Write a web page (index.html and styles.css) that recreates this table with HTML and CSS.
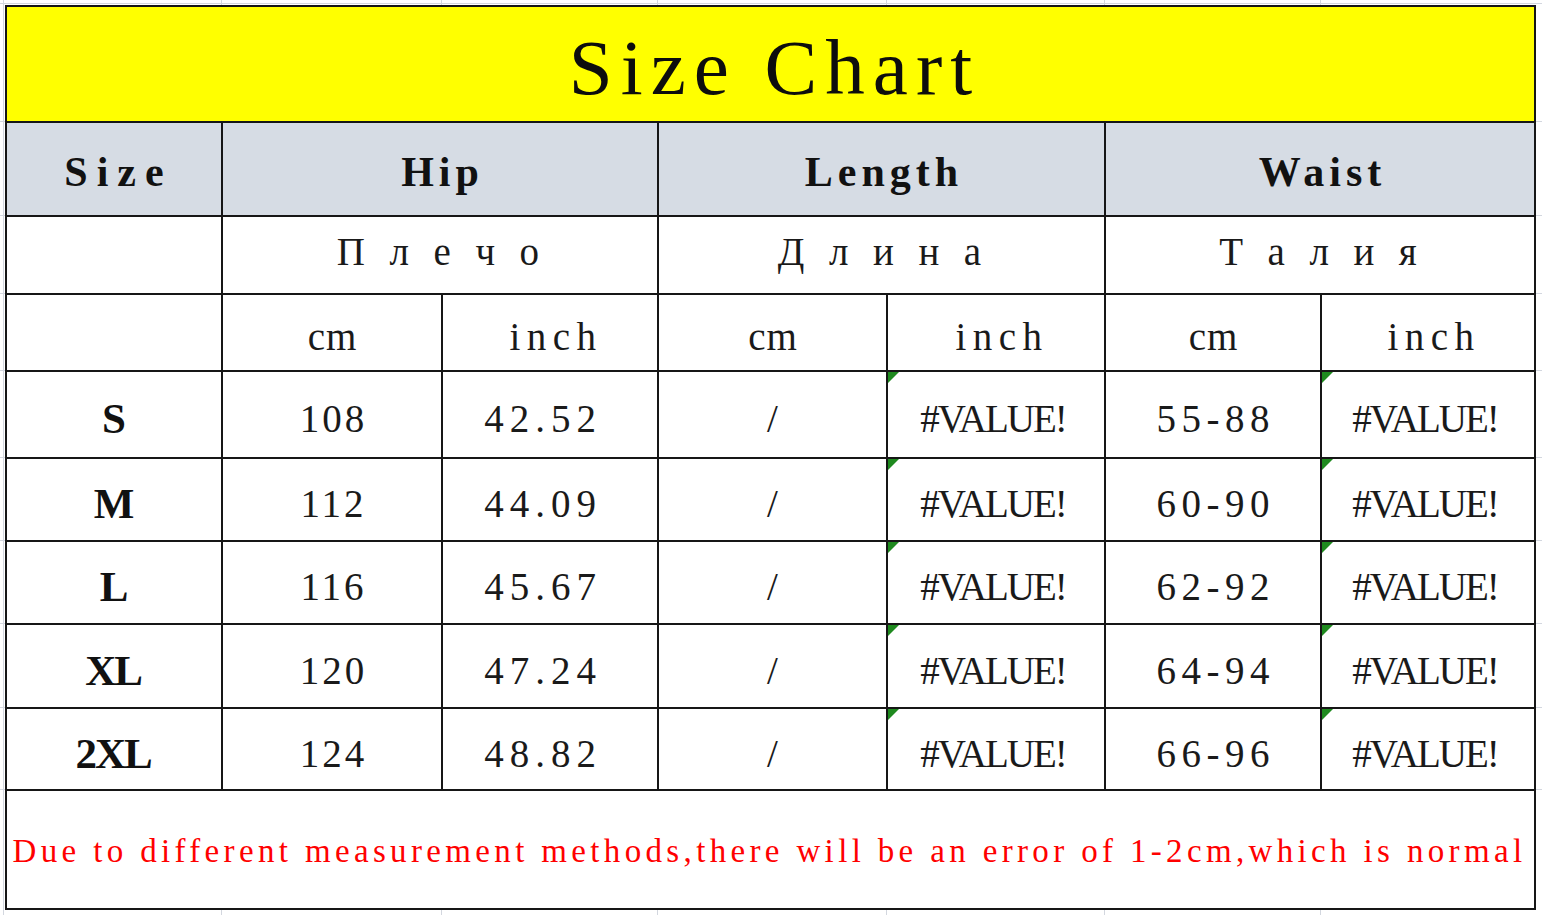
FILE: index.html
```html
<!DOCTYPE html>
<html lang="en">
<head>
<meta charset="utf-8">
<title>Size Chart</title>
<link rel="stylesheet" href="styles.css">
</head>
<body>
<div class="sheet">
  <div class="chart">
    <div class="cell title span7"><span class="t">Size Chart</span></div>

    <div class="cell head"><span class="h h-size">Size</span></div>
    <div class="cell head span2"><span class="h">Hip</span></div>
    <div class="cell head span2"><span class="h">Length</span></div>
    <div class="cell head span2"><span class="h">Waist</span></div>

    <div class="cell"></div>
    <div class="cell span2 ru"><span class="r">П л е ч о</span></div>
    <div class="cell span2 ru"><span class="r">Д л и н а</span></div>
    <div class="cell span2 ru"><span class="r">Т а л и я</span></div>

    <div class="cell"></div>
    <div class="cell unit"><span class="u">cm</span></div>
    <div class="cell unit"><span class="u u-wide">inch</span></div>
    <div class="cell unit"><span class="u">cm</span></div>
    <div class="cell unit"><span class="u u-wide">inch</span></div>
    <div class="cell unit"><span class="u">cm</span></div>
    <div class="cell unit"><span class="u u-wide">inch</span></div>

    <div class="cell size"><span class="s">S</span></div>
    <div class="cell data"><span class="d">108</span></div>
    <div class="cell data"><span class="d d-dec">42.52</span></div>
    <div class="cell data"><span class="d">/</span></div>
    <div class="cell data flag"><span class="d d-err">#VALUE!</span></div>
    <div class="cell data"><span class="d d-range">55-88</span></div>
    <div class="cell data flag"><span class="d d-err">#VALUE!</span></div>

    <div class="cell size"><span class="s">M</span></div>
    <div class="cell data"><span class="d">112</span></div>
    <div class="cell data"><span class="d d-dec">44.09</span></div>
    <div class="cell data"><span class="d">/</span></div>
    <div class="cell data flag"><span class="d d-err">#VALUE!</span></div>
    <div class="cell data"><span class="d d-range">60-90</span></div>
    <div class="cell data flag"><span class="d d-err">#VALUE!</span></div>

    <div class="cell size"><span class="s">L</span></div>
    <div class="cell data"><span class="d">116</span></div>
    <div class="cell data"><span class="d d-dec">45.67</span></div>
    <div class="cell data"><span class="d">/</span></div>
    <div class="cell data flag"><span class="d d-err">#VALUE!</span></div>
    <div class="cell data"><span class="d d-range">62-92</span></div>
    <div class="cell data flag"><span class="d d-err">#VALUE!</span></div>

    <div class="cell size"><span class="s">XL</span></div>
    <div class="cell data"><span class="d">120</span></div>
    <div class="cell data"><span class="d d-dec">47.24</span></div>
    <div class="cell data"><span class="d">/</span></div>
    <div class="cell data flag"><span class="d d-err">#VALUE!</span></div>
    <div class="cell data"><span class="d d-range">64-94</span></div>
    <div class="cell data flag"><span class="d d-err">#VALUE!</span></div>

    <div class="cell size"><span class="s">2XL</span></div>
    <div class="cell data"><span class="d">124</span></div>
    <div class="cell data"><span class="d d-dec">48.82</span></div>
    <div class="cell data"><span class="d">/</span></div>
    <div class="cell data flag"><span class="d d-err">#VALUE!</span></div>
    <div class="cell data"><span class="d d-range">66-96</span></div>
    <div class="cell data flag"><span class="d d-err">#VALUE!</span></div>

    <div class="cell note span7"><span class="n">Due to different measurement methods,there will be an error of 1-2cm,which is normal</span></div>
  </div>
</div>
</body>
</html>
```

FILE: styles.css
```css
* { box-sizing: border-box; }
html, body { margin: 0; padding: 0; background: #fff; }
body {
  width: 1542px;
  height: 915px;
  overflow: hidden;
  font-family: "Liberation Serif", "Times New Roman", serif;
  color: #111;
}
.sheet {
  width: 1542px;
  height: 915px;
  padding: 5px 0 0 5px;
  background-color: #fff;
  background-image:
    linear-gradient(to right, transparent 221px, #d3d7df 221px, #d3d7df 222px, transparent 222px),
    linear-gradient(to right, transparent 441px, #d3d7df 441px, #d3d7df 442px, transparent 442px),
    linear-gradient(to right, transparent 657px, #d3d7df 657px, #d3d7df 658px, transparent 658px),
    linear-gradient(to right, transparent 886px, #d3d7df 886px, #d3d7df 887px, transparent 887px),
    linear-gradient(to right, transparent 1104px, #d3d7df 1104px, #d3d7df 1105px, transparent 1105px),
    linear-gradient(to right, transparent 1320px, #d3d7df 1320px, #d3d7df 1321px, transparent 1321px),
    linear-gradient(to right, transparent 3px, #d3d7df 3px, #d3d7df 4px, transparent 4px),
    linear-gradient(to bottom, transparent 121px, #d3d7df 121px, #d3d7df 122px, transparent 122px),
    linear-gradient(to bottom, transparent 215px, #d3d7df 215px, #d3d7df 216px, transparent 216px),
    linear-gradient(to bottom, transparent 293px, #d3d7df 293px, #d3d7df 294px, transparent 294px),
    linear-gradient(to bottom, transparent 370px, #d3d7df 370px, #d3d7df 371px, transparent 371px),
    linear-gradient(to bottom, transparent 457px, #d3d7df 457px, #d3d7df 458px, transparent 458px),
    linear-gradient(to bottom, transparent 540px, #d3d7df 540px, #d3d7df 541px, transparent 541px),
    linear-gradient(to bottom, transparent 623px, #d3d7df 623px, #d3d7df 624px, transparent 624px),
    linear-gradient(to bottom, transparent 707px, #d3d7df 707px, #d3d7df 708px, transparent 708px),
    linear-gradient(to bottom, transparent 789px, #d3d7df 789px, #d3d7df 790px, transparent 790px),
    linear-gradient(to bottom, transparent 3px, #d3d7df 3px, #d3d7df 4px, transparent 4px);
}
.chart {
  display: grid;
  grid-template-columns: 214px 218px 214px 227px 216px 214px 212px;
  grid-template-rows: 114px 92px 76px 75px 85px 81px 81px 82px 80px 117px;
  gap: 2px;
  padding: 2px;
  width: 1531px;
  background: #161616;
}
.cell {
  position: relative;
  background: #fff;
  display: flex;
  align-items: center;
  justify-content: center;
  white-space: nowrap;
}
.span2 { grid-column: span 2; }
.span7 { grid-column: span 7; }

.title { background: #ffff00; padding-top: 6px; }
.head { background: #d6dce4; padding-top: 6px; }

.t, .h, .d, .s, .n, .r, .u {
  display: inline-block;
  line-height: 1;
}
.t {
  font-size: 79px;
  letter-spacing: 8px;
  margin-right: -8px;
  color: #0d0d0d;
}
.h {
  font-size: 42px;
  font-weight: bold;
  letter-spacing: 5px;
  margin-right: -5px;
}
.h-size { letter-spacing: 9px; margin-right: -9px; }
.r {
  font-size: 39px;
  letter-spacing: 7.4px;
  margin-left: -4px;
  margin-right: -7.4px;
  color: #1a1a1a;
}
.u {
  font-size: 39px;
  letter-spacing: 1px;
  margin-right: -1px;
  color: #1a1a1a;
}
.u-wide { letter-spacing: 6.5px; margin-right: -12px; }
.d {
  font-size: 39px;
  letter-spacing: 3px;
  margin-right: -3px;
  color: #1a1a1a;
}
.d-dec { letter-spacing: 6px; margin-right: 14px; }
.d-range { letter-spacing: 5.5px; margin-right: -5.5px; }
.d-err { letter-spacing: -2px; margin-right: 6px; }
.s {
  font-size: 43px;
  font-weight: bold;
  letter-spacing: -2px;
  margin-right: 2px;
}
.ru { padding-bottom: 8px; }
.unit { padding-top: 8px; }
.data { padding-top: 8px; }
.size { padding-top: 8px; }
.n {
  font-size: 33px;
  color: #ff0000;
  letter-spacing: 4.35px;
  margin-right: 2px;
}
.note { padding-top: 4px; }

.flag::before {
  content: "";
  position: absolute;
  left: 0;
  top: 0;
  width: 0;
  height: 0;
  border-top: 11px solid #1f8a1f;
  border-right: 11px solid transparent;
}
```
